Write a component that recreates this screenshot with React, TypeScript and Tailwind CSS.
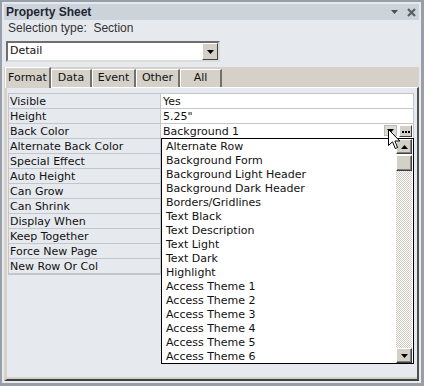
import React from 'react'

const rows: [string, string][] = [
    ['Visible', 'Yes'],
    ['Height', '5.25"'],
    ['Back Color', 'Background 1'],
    ['Alternate Back Color', ''],
    ['Special Effect', ''],
    ['Auto Height', ''],
    ['Can Grow', ''],
    ['Can Shrink', ''],
    ['Display When', ''],
    ['Keep Together', ''],
    ['Force New Page', ''],
    ['New Row Or Col', ''],
]

const colors = [
    'Alternate Row',
    'Background Form',
    'Background Light Header',
    'Background Dark Header',
    'Borders/Gridlines',
    'Text Black',
    'Text Description',
    'Text Light',
    'Text Dark',
    'Highlight',
    'Access Theme 1',
    'Access Theme 2',
    'Access Theme 3',
    'Access Theme 4',
    'Access Theme 5',
    'Access Theme 6',
]

const tabs = ['Format', 'Data', 'Event', 'Other', 'All']
const tabWidths = ['w-[46px]', 'w-[41px]', 'w-[44px]', 'w-[44px]', 'w-[42px]']

function Arrow({ up = false }: { up?: boolean }) {
    return (
        <svg width="7" height="4" viewBox="0 0 7 4">
            <path d={up ? 'M0 4 L3.5 0 L7 4 Z' : 'M0 0 L7 0 L3.5 4 Z'} fill="#000" />
        </svg>
    )
}

function ScrollButton({ up = false }: { up?: boolean }) {
    return (
        <div className="h-[15px] w-full flex items-center justify-center bg-[#d4d0c8] border border-t-white border-l-white border-r-[#404040] border-b-[#404040] shadow-[inset_-1px_-1px_#808080]">
            <Arrow up={up} />
        </div>
    )
}

function Cursor() {
    return (
        <svg className="absolute left-[388px] top-[129px] z-30" width="13" height="21" viewBox="0 0 13 21">
            <path
                d="M0.5 0.5 L0.5 16.5 L4.5 12.8 L7.3 19.5 L9.6 18.5 L6.9 12 L11.8 12 Z"
                fill="#fff"
                stroke="#000"
                strokeWidth="1"
            />
        </svg>
    )
}

export default function App() {
    return (
        <div className="relative w-[424px] h-[386px] bg-[#989fa8] pt-[2px] pl-[2px] pr-[3px] pb-[3px] font-['DejaVu_Sans',Verdana,sans-serif] text-[11px] text-[#111]">
            <div className="h-full flex flex-col bg-[#e6e9ee] p-[2px]">
                {/* Title bar */}
                <div className="h-[16px] flex items-center justify-between bg-[#cdd3db] pl-[2px] pr-[3px]">
                    <span className="font-['Liberation_Sans',Arial,sans-serif] font-bold text-[12px] text-[#1e2633] leading-none">
                        Property Sheet
                    </span>
                    <div className="flex items-center gap-[9px]">
                        <svg width="7" height="4" viewBox="0 0 7 4">
                            <path d="M0 0 L7 0 L3.5 4 Z" fill="#4a4f57" />
                        </svg>
                        <svg width="9" height="9" viewBox="0 0 9 9">
                            <path d="M1 1 L8 8 M8 1 L1 8" stroke="#5a5f66" strokeWidth="2.2" />
                        </svg>
                    </div>
                </div>

                <div className="h-[16px] flex items-center pl-[4px] text-[#333] whitespace-pre font-['Liberation_Sans',Arial,sans-serif] text-[12px]">
                    Selection type:  Section
                </div>

                {/* Combo */}
                <div className="mt-[5px] ml-[2px] w-[214px] h-[21px] flex bg-white border-2 border-t-[#6e6e6e] border-l-[#6e6e6e] border-r-[#dcdcdc] border-b-[#dcdcdc]">
                    <div className="flex-1 flex items-center pl-[2px]">Detail</div>
                    <div className="w-[16px] flex items-center justify-center bg-[#d4d0c8] border border-t-white border-l-white border-r-[#404040] border-b-[#404040]">
                        <Arrow />
                    </div>
                </div>

                {/* Tabs */}
                <div className="mt-[5px] h-[20px] flex items-end bg-[#d5d1c9] pl-[1px]">
                    {tabs.map((t, i) => (
                        <div
                            key={t}
                            className={
                                'flex items-center justify-center bg-[#d5d1c9] border-t border-l border-t-white border-l-white border-r-2 border-r-[#707070] ' +
                                tabWidths[i] +
                                (i === 0 ? ' h-[21px] -mb-[1px] z-10 relative' : ' h-[18px]')
                            }
                        >
                            {t}
                        </div>
                    ))}
                </div>

                {/* Tab page */}
                <div className="flex-1 flex flex-col bg-[#d5d1c9] border-t border-t-white border-l-[3px] border-l-[#d5d1c9] border-r-2 border-r-[#505050] border-b-2 border-b-[#404040] pb-[2px]">
                    <div className="flex-1 bg-[#e6e9ee] pt-[5px] pl-[1px] pr-[3px]">
                        <div className="relative border border-[#c3c7cd]">
                            {rows.map(([label, value], i) => (
                                <div key={label} className="h-[15px] flex border-b border-[#c3c7cd] last:border-b-0">
                                    <div className="w-[152px] shrink-0 border-r border-[#c3c7cd] pl-[1px] pt-[1px] leading-[13px] overflow-hidden">
                                        {label}
                                    </div>
                                    <div className="flex-1 bg-white flex items-end pl-[2px] leading-[13px]">
                                        <span className="flex-1 self-start pt-[1px]">{value}</span>
                                        {i === 2 && (
                                            <div className="flex gap-[2px] pr-[1px] pb-[1px]">
                                                <div className="w-[13px] h-[11px] flex items-center justify-center bg-[#dcdad4] border border-[#bdbab3]">
                                                    <Arrow />
                                                </div>
                                                <div className="w-[13px] h-[12px] flex items-end justify-center pb-[3px] gap-[1px] bg-[#d4d0c8] border border-t-white border-l-white border-r-[#404040] border-b-[#404040]">
                                                    <span className="w-[2px] h-[2px] bg-black" />
                                                    <span className="w-[2px] h-[2px] bg-black" />
                                                    <span className="w-[2px] h-[2px] bg-black" />
                                                </div>
                                            </div>
                                        )}
                                    </div>
                                </div>
                            ))}

                            {/* Dropdown list */}
                            <div className="absolute left-[152px] top-[44px] w-[253px] h-[226px] flex bg-white border border-black z-20">
                                <div className="flex-1 pl-[4px] pt-[1px] overflow-hidden">
                                    {colors.map((c) => (
                                        <div key={c} className="h-[14px] leading-[14px] whitespace-nowrap">
                                            {c}
                                        </div>
                                    ))}
                                </div>
                                <div className="w-[16px] flex flex-col mr-[1px]">
                                    <ScrollButton up />
                                    <div className="h-[16px] mt-[1px] bg-[#d4d0c8] border border-t-white border-l-white border-r-[#404040] border-b-[#404040] shadow-[inset_-1px_-1px_#808080]" />
                                    <div className="flex-1 bg-[repeating-conic-gradient(#cfcbc3_0_25%,#ffffff_0_50%)] bg-[length:2px_2px]" />
                                    <ScrollButton />
                                </div>
                            </div>
                        </div>
                    </div>
                </div>
            </div>
            <Cursor />
        </div>
    )
}
